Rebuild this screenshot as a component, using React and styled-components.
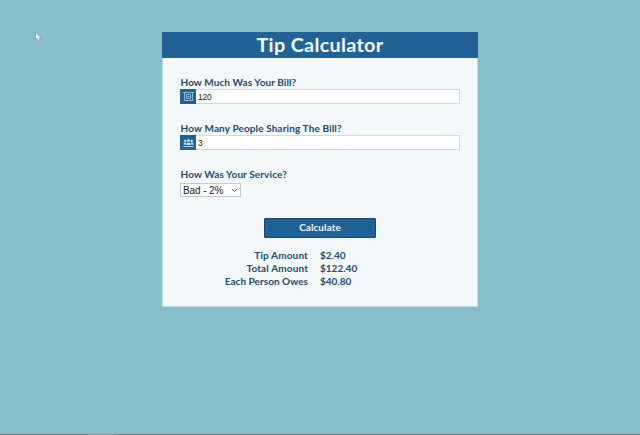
import React from "react";
import styled, { createGlobalStyle } from "styled-components";

const Global = createGlobalStyle`
  * { box-sizing: border-box; }
  body { margin: 0; background: #86bfcb; overflow: hidden; }
`;

const Page = styled.div`
  position: relative;
  width: 100%;
  height: 435px;
  padding-top: 32px;
  background: #86bfcb;
  font-family: Lato, "Noto Sans", sans-serif;
  color: #214a70;
`;

const Taskbar = styled.div`
  position: absolute;
  left: 0;
  right: 0;
  bottom: 0;
  height: 1px;
  padding-left: 88px;
  background: #5b7c86;
`;

const ActiveTask = styled.div`
  width: 30px;
  height: 1px;
  background: #7b9ca5;
`;

const Pointer = styled.svg`
  position: absolute;
  left: 34px;
  top: 31px;
`;

const Card = styled.main`
  width: 316px;
  height: 275px;
  margin: 0 0 0 162px;
  background: #f3f8fb;
  border: 1px solid #bddbe3;
  border-top: 0;
`;

const Header = styled.h1`
  height: 26px;
  margin: 0 -1px;
  background: #216397;
  color: #f3f8fb;
  text-align: center;
  white-space: nowrap;
  font-size: 19.8px;
  line-height: 24px;
  font-weight: 700;
  letter-spacing: 0.33px;
`;

const Form = styled.div`
  padding: 18px 17px 0;
`;

const Field = styled.div`
  height: 46px;
`;

const Label = styled.label`
  display: block;
  height: 13px;
  line-height: 13px;
  font-size: 10px;
  font-weight: 700;
  white-space: nowrap;
  letter-spacing: ${(p) => p.$spacing}px;
  padding-left: 0.5px;
`;

const InputRow = styled.div`
  display: flex;
  width: 280px;
  height: 15px;
  border: 1px solid #d3d8da;
  background: #fff;
`;

const IconTile = styled.span`
  display: flex;
  align-items: center;
  justify-content: center;
  flex: none;
  width: 16px;
  height: 15px;
  margin: -1px 0 0 -1px;
  background: #216397;
`;

const Value = styled.span`
  padding-left: 2px;
  font: 8.4px/14px "Liberation Sans", sans-serif;
  letter-spacing: -0.1px;
  color: #222;
`;

const Select = styled.div`
  display: flex;
  align-items: center;
  justify-content: space-between;
  width: 61px;
  height: 14px;
  margin-top: 2px;
  padding: 1px 2px 0 2px;
  border: 1px solid #c6cacc;
  background: #fff;
  font: 10px/11px "Liberation Sans", sans-serif;
  letter-spacing: -0.1px;
  white-space: nowrap;
  color: #222;
`;

const Button = styled.button`
  display: block;
  width: 112px;
  height: 20px;
  margin: 4px 0 0 84px;
  padding: 0 0 2px;
  border: 1px solid #1b466c;
  border-radius: 1px;
  background: #216397;
  color: #f3f8fb;
  font: 700 9.8px/16px Lato, sans-serif;
  letter-spacing: 0.15px;
`;

const Results = styled.dl`
  display: grid;
  grid-template-columns: 128px 1fr;
  column-gap: 12px;
  grid-auto-rows: 13px;
  margin: 11px 0 0;
  font-size: 10px;
  font-weight: 700;
  line-height: 13px;
  white-space: nowrap;
`;

const Term = styled.dt`
  text-align: right;
  letter-spacing: ${(p) => p.$spacing}px;
`;

const Amount = styled.dd`
  margin: 0;
  letter-spacing: 0;
`;

const BillIcon = () => (
  <svg width="15" height="15" viewBox="0 0 15 15" fill="none" stroke="#a9cbe2" strokeWidth="0.8">
    <path d="M2 3.5h11M3.5 3.5v8h8v-8" />
    <path d="M5.5 5.5h4v4h-4z" />
    <path d="M6.3 7.5h2.4" />
  </svg>
);

const PeopleIcon = () => (
  <svg width="15" height="15" viewBox="0 0 15 15" fill="#cfe2ef">
    <circle cx="4.3" cy="6" r="1.2" />
    <circle cx="7.5" cy="5.5" r="1.4" />
    <circle cx="10.7" cy="6" r="1.2" />
    <path d="M2.5 9.4c0-2.2 2.5-2.4 3-1.3-.7.4-.9.9-.9 1.7zM12.5 9.4c0-2.2-2.5-2.4-3-1.3.7.4.9.9.9 1.7zM5.2 10c0-3.3 4.6-3.3 4.6 0z" />
    <path d="M2.5 11h10v.9h-10z" />
  </svg>
);

export default function App() {
  return (
    <Page>
      <Global />
      <Pointer width="8" height="11" viewBox="0 0 8 11">
        <path d="M1.5 1v7.8l1.6-1.4 1.5 2.8 1.6-.8-1.2-2.4h2.2z" fill="#fff" stroke="#64757c" strokeWidth="0.5" />
      </Pointer>
      <Card>
        <Header>Tip Calculator</Header>
        <Form>
          <Field>
            <Label $spacing={0.08}>How Much Was Your Bill?</Label>
            <InputRow><IconTile><BillIcon /></IconTile><Value>120</Value></InputRow>
          </Field>
          <Field>
            <Label $spacing={0.12}>How Many People Sharing The Bill?</Label>
            <InputRow><IconTile><PeopleIcon /></IconTile><Value>3</Value></InputRow>
          </Field>
          <Field>
            <Label $spacing={0.1}>How Was Your Service?</Label>
            <Select>
              Bad - 2%
              <svg width="7" height="5" viewBox="0 0 7 5" fill="none" stroke="#444" strokeWidth="0.9">
                <path d="M.8.8 3.5 3.5 6.2.8" />
              </svg>
            </Select>
          </Field>
          <Button>Calculate</Button>
          <Results>
            <Term $spacing={0.16}>Tip Amount</Term><Amount>$2.40</Amount>
            <Term $spacing={0.14}>Total Amount</Term><Amount>$122.40</Amount>
            <Term $spacing={0.04}>Each Person Owes</Term><Amount>$40.80</Amount>
          </Results>
        </Form>
      </Card>
      <Taskbar><ActiveTask /></Taskbar>
    </Page>
  );
}
